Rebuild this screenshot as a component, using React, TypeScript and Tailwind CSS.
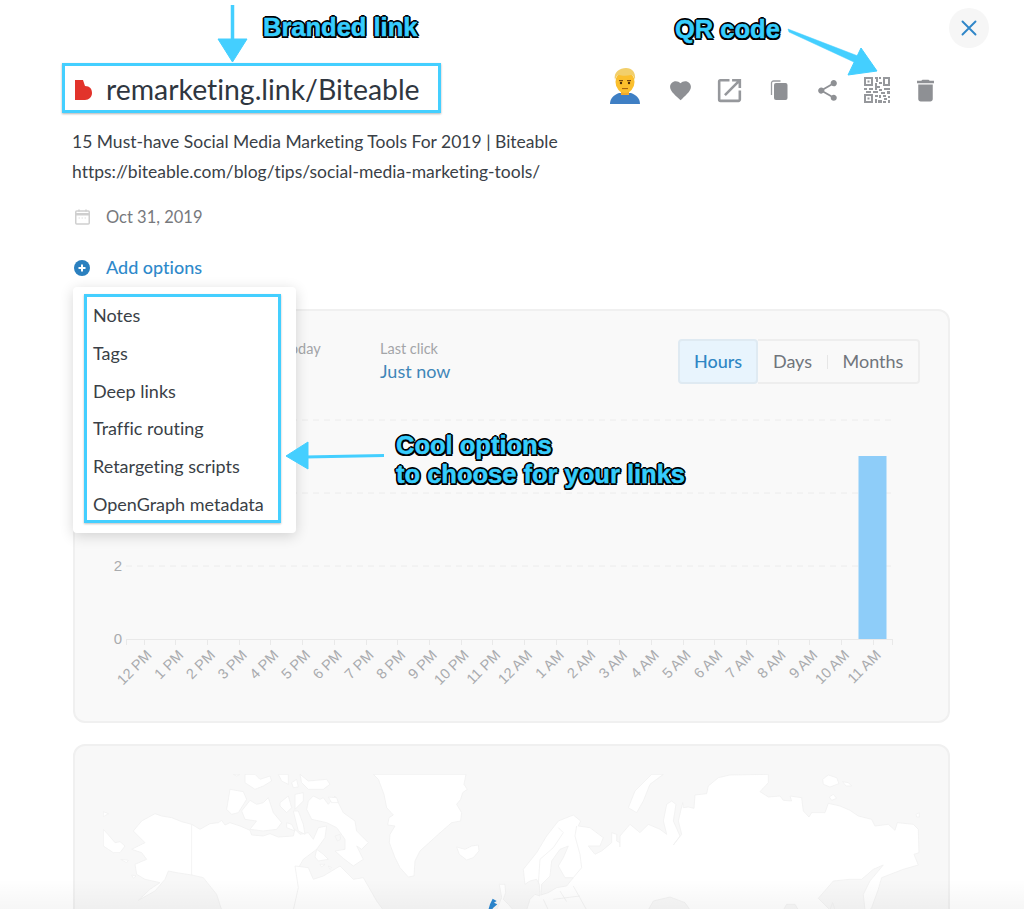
import React from "react";
import { MdFavorite, MdOpenInNew, MdShare, MdDelete } from "react-icons/md";

const hours = ["12 PM","1 PM","2 PM","3 PM","4 PM","5 PM","6 PM","7 PM","8 PM","9 PM","10 PM","11 PM","12 AM","1 AM","2 AM","3 AM","4 AM","5 AM","6 AM","7 AM","8 AM","9 AM","10 AM","11 AM"];
const menu = ["Notes","Tags","Deep links","Traffic routing","Retargeting scripts","OpenGraph metadata"];
const cyan = "#44cfff";

const annotation = "absolute font-['Liberation_Sans',Arial,sans-serif] font-bold text-[#36cdfd] text-[25.5px] leading-[29px] whitespace-nowrap [-webkit-text-stroke:0.5px_#36cdfd] [text-shadow:2px_0_0_#000,-2px_0_0_#000,0_2px_0_#000,0_-2px_0_#000,1.5px_1.5px_0_#000,-1.5px_1.5px_0_#000,1.5px_-1.5px_0_#000,-1.5px_-1.5px_0_#000]";

function Emoji() {
  return (
    <svg width="30" height="36" viewBox="0 0 30 36">
      <path d="M0 36c0-6 4-9 9-11h12c5 2 9 5 9 11z" fill="#3f7fc4" />
      <rect x="11" y="20" width="8" height="7" fill="#f0a92c" />
      <ellipse cx="15" cy="14" rx="9.5" ry="11" fill="#fbbf2d" />
      <path d="M5 12C3 4 10 0 16 0c6 0 10 4 9 12-1-3-2-5-4-5-4 1-9 1-12 0-2 0-3 2-4 5z" fill="#f2cf6b" />
      <rect x="9" y="12" width="4" height="1.2" fill="#7a4a10" />
      <rect x="17" y="12" width="4" height="1.2" fill="#7a4a10" />
      <circle cx="11" cy="15" r="1.2" fill="#4a2a08" />
      <circle cx="19" cy="15" r="1.2" fill="#4a2a08" />
      <rect x="12" y="20" width="6" height="1.1" fill="#a8650f" />
    </svg>
  );
}

function Copy() {
  return (
    <svg width="18" height="20" viewBox="0 0 18 20">
      <path d="M1.5 15V3a2 2 0 0 1 2-2h7" fill="none" stroke="#9a9ca0" strokeWidth="1.3" />
      <rect x="4" y="3" width="13.5" height="17" rx="2" fill="#8e9094" />
    </svg>
  );
}

function Qr() {
  return (
    <svg width="26" height="26" viewBox="0 0 26 26" fill="#96989c">
      <path fillRule="evenodd" d="M0 0h9v9H0zM2 2v5h5V2zM0 17h9v9H0zm2 2v5h5v-5zM15 0h2v2h-2zM11 0h3v5h-2V2h-1zM19 0h7v9h-7zm2 2v5h3V2z" />
      <rect x="3.5" y="3.5" width="2" height="2" />
      <rect x="3.5" y="20.5" width="2" height="2" />
      <path d="M11 6h2v3h3v2h-3v2h-2zM15 5h3v2h-3zM0 11h3v2H0zM5 11h4v2H5zM2 14h5v2H2zM15 12h3v2h-3zM20 11h6v2h-6zM9 14h5v2H9zM17 15h4v2h-4zM23 14h3v3h-3zM11 18h3v2h-3zM15 18h2v3h-2zM19 18h3v2h-3zM24 19h2v2h-2zM11 22h2v4h-2zM14 23h4v3h-4zM20 21h3v2h-3zM19 24h3v2h-3zM24 23h2v3h-2z" />
    </svg>
  );
}

function Chart() {
  return (
    <svg width="872" height="310" viewBox="75 400 872 310" className="block mt-[16px]">
      {[420, 493, 566].map((y) => (
        <line key={y} x1="126" x2="893" y1={y} y2={y} stroke="#ececec" strokeDasharray="6 5" />
      ))}
      <rect x="858.5" y="456" width="28" height="183" fill="#8ecdf9" />
      <line x1="126" x2="893" y1="639.5" y2="639.5" stroke="#e9e9e9" />
      <line x1="126.5" x2="126.5" y1="639" y2="645" stroke="#e9e9e9" />
      <line x1="892.5" x2="892.5" y1="639" y2="645" stroke="#e9e9e9" />
      {[["2", 566], ["0", 639]].map(([t, y]) => (
        <text key={t} x="122" y={Number(y) + 5} textAnchor="end" fontSize="15" fill="#a9abae" fontFamily="Liberation Sans, Arial, sans-serif">{t}</text>
      ))}
      {hours.map((h, i) => {
        const x = 143.6 + 31.7 * i;
        return (
          <g key={h}>
            <line x1={Math.round(x) + 0.5} x2={Math.round(x) + 0.5} y1="639" y2="645" stroke="#e9e9e9" />
            <text transform={`translate(${x + 9} 656) rotate(-45)`} textAnchor="end" fontSize="14.5" fill="#a9abae" fontFamily="Liberation Sans, Arial, sans-serif">{h}</text>
          </g>
        );
      })}
    </svg>
  );
}

const landA = [
  "M10 175L28 195L45 215L60 212L75 225L60 245L40 245L25 235L10 225Z",
  "M100 180L125 150L165 128L185 135L215 140L245 152L275 160L300 175L330 158L355 155L365 148L375 162L390 155L420 165L450 178L455 192L490 195L510 188L535 198L580 195L585 175L600 190L625 185L640 205L655 170L680 165L675 200L650 235L610 265L590 300L600 345L640 370L670 385L690 417L365 417L350 370L310 320L275 312L230 305L205 300L195 325L165 360L115 388L150 355L180 335L135 325L110 310L105 280L140 265L125 245L95 235L135 215Z",
  "M650 235L670 250L685 265L655 270L645 258Z",
  "M625 90L640 75L660 85L670 80L685 100L705 75L715 95L730 125L765 150L770 180L805 215L785 235L770 225L790 265L760 285L730 262L705 240L735 235L735 205L710 170L680 155L635 145L620 115Z",
  "M425 120L450 88L470 100L490 95L505 80L520 125L545 155L530 175L490 180L450 175L470 150L435 145Z",
  "M390 55L430 62L440 85L415 125L395 130L380 115Z",
  "M435 10L465 10L480 25L510 15L515 30L490 45L465 55L435 35Z",
  "M535 10L565 10L565 40L545 30Z",
  "M575 35L590 25L595 48L580 50Z",
  "M600 10L625 30L680 25L690 40L670 55L625 55L605 35Z",
  "M400 10L420 10L410 15Z",
  "M540 95L565 75L575 110L560 125L540 105Z",
  "M585 70L610 65L610 90L585 115Z",
  "M580 120L595 120L610 160L615 190L595 180Z",
  "M560 155L575 160L585 180L560 170Z",
  "M685 78L710 80L715 95L695 95Z",
  "M10 122L25 128L10 137Z",
  "M62 265L85 268L80 275Z",
  "M95 312L108 315L100 322Z",
  "M660 280L675 280L665 288Z",
  "M685 285L695 290L690 295Z",
];
const landB = [
  "M0 285L40 325L70 320L110 390L130 417L-140 417L-125 350L-135 285L-95 290L-80 325L-50 315Z",
  "M100 10L378 10L372 40L382 55L368 65L362 85L350 100L365 125L362 150L335 155L295 190L240 240L225 270L222 315L205 318L180 290L165 260L148 215L150 190L165 165L143 162L147 140L160 132L140 110L132 70L115 25Z",
  "M350 228L375 235L395 225L415 222L417 240L400 260L380 267L358 250Z",
  "M550 295L590 245L620 195L655 150L700 132L722 150L715 165L750 170L790 200L780 225L745 225L765 250L785 240L815 215L815 185L830 190L830 210L840 215L840 417L560 417L570 385L585 370L600 375L598 340L590 325L570 330L555 340Z",
  "M478 340L495 340L497 365L490 385L505 400L520 417L470 417L485 380Z",
];
const landC = [
  "M35 10L70 10L30 40L10 90L-10 125L-35 110L-15 60Z",
  "M-60 195L-30 160L0 185L25 160L60 175L80 190L70 150L80 100L95 90L108 100L100 150L120 195L100 222L125 190L115 150L128 95L130 110L145 108L162 112L165 72L200 68L205 45L235 20L270 12L385 10L385 35L360 62L385 78L420 75L430 88L455 90L450 75L485 80L490 120L507 138L515 125L555 125L565 97L600 105L630 118L655 135L695 145L705 165L745 160L765 178L772 155L820 160L835 175L837 245L822 250L835 282L790 295L725 320L715 355L695 410L690 417L675 417L670 370L690 330L730 282L700 295L665 325L630 325L580 330L535 382L570 417L-60 417Z",
  "M548 25L565 12L590 20L597 38L570 48L550 40Z",
  "M608 32L625 35L635 45L618 45Z",
  "M568 78L580 70L590 82L575 88Z",
  "M828 130L838 125L838 138L830 138Z",
];

function Shapes({ x0, paths }: { x0: number; paths: string[] }) {
  return (
    <g transform={`translate(${x0} 770) scale(0.3333)`}>
      {paths.map((d, i) => <path key={i} d={d} fill="#ffffff" stroke="#f0f0f0" strokeWidth="2.5" strokeLinejoin="round" />)}
    </g>
  );
}

function WorldMap() {
  const sea = "#f8f8f8";
  const line = "#f0f0f0";
  return (
    <svg width="830" height="136" viewBox="103 773 830 136" className="block mt-[28px] ml-[28px]">
      <Shapes x0={100} paths={landA} />
      <Shapes x0={340} paths={landB} />
      <Shapes x0={640} paths={landC} />
      <rect x="612" y="846" width="16" height="63" fill="#ffffff" />
      <g transform="translate(100 770) scale(0.3333)" stroke={line} strokeWidth="2.5" fill="none">
        <path d="M275 160V312" />
        <path d="M705 195L720 190L722 205L712 210Z" fill={sea} />
      </g>
      <g transform="translate(340 770) scale(0.3333)" stroke={line} strokeWidth="2.5">
        <path d="M660 235L685 225L670 260L655 285L675 320L700 320L680 345L650 350L625 365L603 372L605 340L630 315L635 270Z" fill={sea} />
        <path d="M655 170L670 185L640 230L600 265L595 340M710 165L705 195L720 250L725 290L700 320M700 345L740 417M640 385L720 375M610 385L625 417M660 360L680 392" fill="none" />
        <path d="M458 383L470 390L462 395L472 400L460 410L455 417L445 417L450 400Z" fill="#2b87d0" stroke="none" />
      </g>
      <g transform="translate(640 770) scale(0.3333)" stroke={line} strokeWidth="2.5">
        <path d="M25 417L40 390L90 378L135 395L150 417Z" fill={sea} />
        <path d="M430 417L440 400L465 400L475 417Z" fill={sea} />
        <path d="M570 417L578 395L585 417" fill={sea} />
      </g>
    </svg>
  );
}

function Overlays() {
  return (
    <>
      <div className="absolute left-[62px] top-[63px] w-[379px] h-[50px] border-[3px] border-[#44cfff] shadow-[0_1px_2px_rgba(0,0,0,0.3)]" />
      <div className="absolute left-[73px] top-[287px] w-[223px] h-[246px] bg-white rounded-[4px] shadow-[0_3px_14px_rgba(0,0,0,0.16)] pt-[7px] pl-[11px]">
        <div className="w-[197px] h-[229px] border-[3px] border-[#44cfff] shadow-[0_1px_2px_rgba(0,0,0,0.25)] flex flex-col justify-start">
          {menu.map((m) => (
            <div key={m} className="h-[37.8px] shrink-0 leading-[37.8px] pl-[6px] text-[18px] text-[#3a3f47] whitespace-nowrap">{m}</div>
          ))}
        </div>
      </div>
      <svg width="1024" height="909" className="absolute left-0 top-0 pointer-events-none">
        <g fill={cyan} stroke={cyan} strokeLinejoin="round">
          <line x1="232.5" y1="5" x2="232.5" y2="40" strokeWidth="3.5" />
          <path d="M218 39H247L232.5 62Z" strokeWidth="1" />
          <path d="M788 29L789 32L856 63L858 56Z" strokeWidth="0.5" />
          <path d="M861 48L848 75L877 71Z" strokeWidth="1" />
          <line x1="305" y1="457" x2="384" y2="455.5" strokeWidth="3" />
          <path d="M286 456L308 442V469Z" strokeWidth="1" />
        </g>
      </svg>
      <div className={annotation + " left-[263px] top-[13px]"}>Branded link</div>
      <div className={annotation + " left-[675px] top-[15px]"}>QR code</div>
      <div className={annotation + " left-[396px] top-[431px]"}>Cool options<br />to choose for your links</div>
    </>
  );
}

export default function App() {
  return (
    <div className="relative w-[1024px] h-[909px] overflow-hidden bg-white font-['Lato','Open_Sans',sans-serif] [font-variant-ligatures:none]">
      <div className="flex justify-end pt-[8px] pr-[35px]">
        <button className="w-[40px] h-[40px] rounded-full bg-[#f6f6f6] flex items-center justify-center">
          <svg width="16" height="16" viewBox="0 0 16 16" stroke="#2f86c8" strokeWidth="1.9" strokeLinecap="round"><path d="M1.5 1.5l13 13M14.5 1.5l-13 13" /></svg>
        </button>
      </div>

      <div className="mt-[18px] ml-[75px] w-[875px] h-[48px] flex items-center justify-between">
        <div className="flex items-center">
          <svg width="17" height="20" viewBox="0 0 17 20"><path d="M0 0h8l2 6c5 0 7 3 7 7 0 4-3 7-7 7H0z" fill="#e2332b" /></svg>
          <span className="ml-[14px] pb-[2px] text-[28.4px] text-[#2f3640] leading-[46px]">remarketing.link/Biteable</span>
        </div>
        <div className="flex items-center">
          <div className="w-[31px] mr-[16px] mb-[8px] flex justify-center"><Emoji /></div>
          <div className="w-[49px] flex justify-center"><MdFavorite size={25} color="#8e9094" /></div>
          <div className="w-[49px] flex justify-center"><MdOpenInNew size={31} color="#96989c" /></div>
          <div className="w-[49px] flex justify-center"><Copy /></div>
          <div className="w-[49px] flex justify-center"><MdShare size={25} color="#8e9094" /></div>
          <div className="w-[49px] flex justify-center"><Qr /></div>
          <div className="w-[49px] flex justify-center"><MdDelete size={29} color="#8e9094" /></div>
        </div>
      </div>

      <div className="mt-[13px] ml-[72px] text-[17.5px] leading-[30px] text-[#3a3f47] whitespace-nowrap">
        <div>15 Must-have Social Media Marketing Tools For 2019 | Biteable</div>
        <div>https://biteable.com/blog/tips/social-media-marketing-tools/</div>
      </div>

      <div className="mt-[15px] ml-[75px] h-[30px] flex items-center">
        <svg width="15" height="16" viewBox="0 0 15 16" fill="none"><rect x="0.75" y="2" width="13.5" height="13" rx="1" stroke="#cfcfcf" strokeWidth="1.5" /><path d="M1 4h13v2.5H1z" fill="#cfcfcf" /><path d="M4 0.5v2M11 0.5v2" stroke="#cfcfcf" strokeWidth="1.5" /><path d="M3.5 9h8" stroke="#dddddd" strokeDasharray="1.5 1.5" /></svg>
        <span className="ml-[16px] pt-[1px] text-[16.5px] text-[#77797d]">Oct 31, 2019</span>
      </div>

      <div className="mt-[21px] ml-[74px] h-[30px] flex items-center">
        <svg width="16" height="16" viewBox="0 0 16 16"><circle cx="8" cy="8" r="8" fill="#2b80bf" /><path d="M8 4.5v7M4.5 8h7" stroke="#fff" strokeWidth="2" /></svg>
        <span className="ml-[16px] pb-[2px] text-[18px] font-medium text-[#2f8acb]">Add options</span>
      </div>

      <section className="mt-[26px] ml-[73px] w-[877px] h-[414px] border-2 border-[#f0f0f0] rounded-[12px] bg-[#f9f9f9]">
        <div className="flex items-start justify-between pt-[28px] pl-[208px] pr-[28px]">
          <div className="flex">
            <div className="w-[97px] text-[14.5px] leading-[20px] text-[#a3a5a8]">Today</div>
            <div>
              <div className="text-[14.5px] leading-[20px] text-[#a3a5a8]">Last click</div>
              <div className="mt-[2px] text-[18px] leading-[20px] text-[#3f86b8]">Just now</div>
            </div>
          </div>
          <div className="flex h-[45px] text-[18px]">
            <div className="w-[80px] flex items-center justify-center bg-[#e8f4fd] border-2 border-[#dfeaf2] rounded-[4px] text-[#2f86c4] font-medium">Hours</div>
            <div className="w-[162px] flex items-center border-2 border-l-0 border-[#eeeeee] rounded-r-[4px] text-[#70757c]">
              <div className="w-[69px] text-center">Days</div>
              <div className="w-px h-[14px] bg-[#e6e6e6]" />
              <div className="flex-1 text-center">Months</div>
            </div>
          </div>
        </div>
        <Chart />
      </section>

      <section className="mt-[21px] ml-[73px] w-[877px] h-[300px] border-2 border-[#f0f0f0] rounded-[12px] bg-[#f8f8f8]">
        <WorldMap />
      </section>

      <div className="absolute left-0 bottom-0 w-full h-[30px] bg-gradient-to-t from-black/[0.035] to-transparent" />
      <Overlays />
    </div>
  );
}
